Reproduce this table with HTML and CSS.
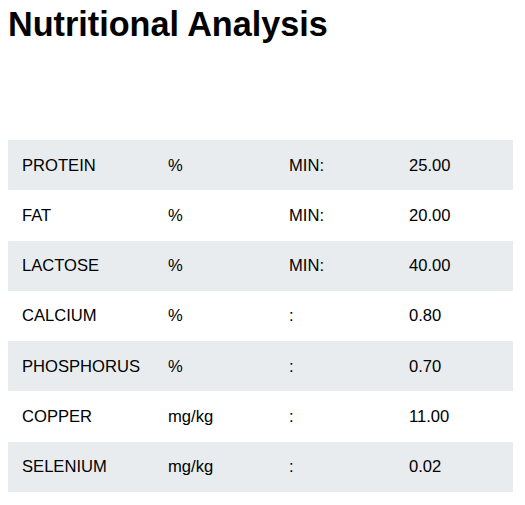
FILE: index.html
```html
<!DOCTYPE html>
<html>
<head>
<meta charset="utf-8">
<link rel="stylesheet" href="styles.css">
</head>
<body>
<h1 class="title">Nutritional Analysis</h1>
<table class="analysis">
  <colgroup>
    <col class="c1"><col class="c2"><col class="c3"><col class="c4">
  </colgroup>
  <tbody>
    <tr><td>PROTEIN</td><td>%</td><td>MIN:</td><td>25.00</td></tr>
    <tr><td>FAT</td><td>%</td><td>MIN:</td><td>20.00</td></tr>
    <tr><td>LACTOSE</td><td>%</td><td>MIN:</td><td>40.00</td></tr>
    <tr><td>CALCIUM</td><td>%</td><td>:</td><td>0.80</td></tr>
    <tr><td>PHOSPHORUS</td><td>%</td><td>:</td><td>0.70</td></tr>
    <tr><td>COPPER</td><td>mg/kg</td><td>:</td><td>11.00</td></tr>
    <tr><td>SELENIUM</td><td>mg/kg</td><td>:</td><td>0.02</td></tr>
  </tbody>
</table>
</body>
</html>
```
FILE: styles.css
```css
body {
  margin: 8px;
  font-family: "Liberation Sans", Arial, sans-serif;
  color: #000;
  background: #fff;
}
.title {
  margin: 0 0 100px 0;
  font-size: 34.2px;
  font-weight: bold;
  line-height: 32px;
}
.analysis {
  width: 505px;
  border-collapse: collapse;
  table-layout: fixed;
  font-size: 16.6px;
}
.c1 { width: 146px; }
.c2 { width: 121px; }
.c3 { width: 120px; }
.c4 { width: 118px; }
.analysis td {
  padding: 16.6px 0 15.4px 14px;
  line-height: 18.3px;
  vertical-align: middle;
}
.analysis tr:nth-child(odd) td {
  background: #e9ecef;
}
```
